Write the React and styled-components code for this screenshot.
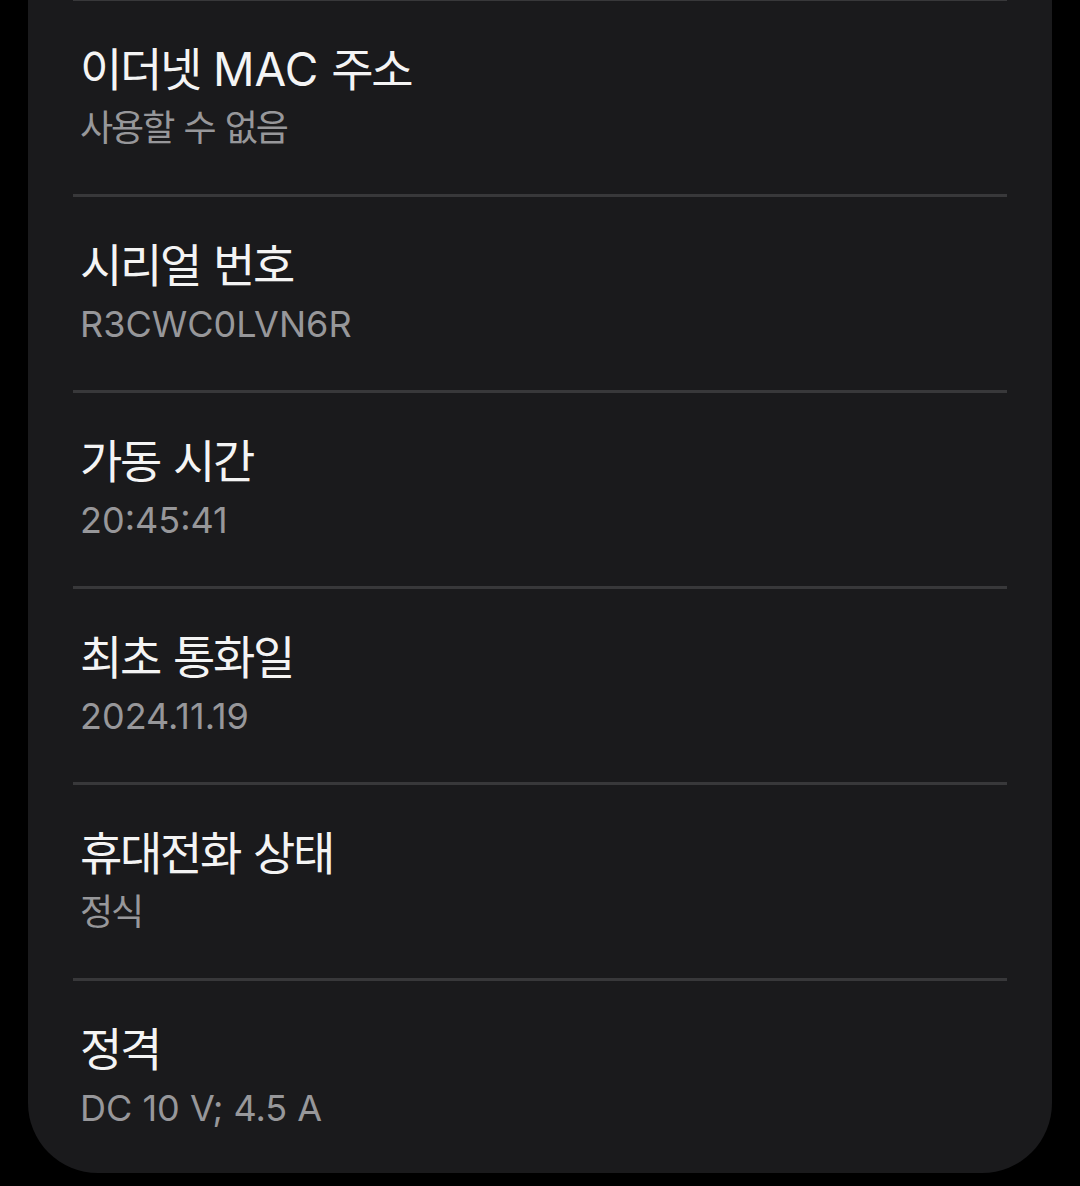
import React from 'react';
import styled, { createGlobalStyle } from 'styled-components';

const GlobalStyle = createGlobalStyle`
  html, body {
    margin: 0;
    padding: 0;
    background: #000;
  }
  body {
    font-family: Inter, "Noto Sans CJK KR", sans-serif;
    -webkit-font-smoothing: antialiased;
  }
`;

const Page = styled.div`
  width: 1080px;
  height: 1186px;
  background: #000;
  overflow: hidden;
`;

const Card = styled.div`
  margin: -2px 28px 0;
  padding: 0 45px;
  height: 1175px;
  background: #1a1a1c;
  border-radius: 0 0 70px 70px;
  box-sizing: border-box;
`;

const Row = styled.div`
  height: 196px;
  box-sizing: border-box;
  border-top: 3px solid #38383a;
  padding: 40px 7px 0;
  display: flex;
  flex-direction: column;
`;

const Title = styled.div`
  color: #f4f4f4;
  font-size: 46px;
  line-height: 56px;
  white-space: nowrap;
`;

const Value = styled.div`
  color: #97979a;
  font-size: 36px;
  line-height: 46px;
  margin-top: 8px;
  white-space: nowrap;
`;

// Samsung's Hangul is narrower than Noto's full-width glyphs
const Hangul = styled.span`
  letter-spacing: ${(p) => p.$tight};
`;

const splitHangul = (text, tight) =>
  text.split(/([\uac00-\ud7a3]+)/).map((part, i) =>
    /[\uac00-\ud7a3]/.test(part) ? (
      <Hangul key={i} $tight={tight}>{part}</Hangul>
    ) : (
      part
    )
  );

const items = [
  { title: '이더넷 MAC 주소', value: '사용할 수 없음' },
  { title: '시리얼 번호', value: 'R3CWC0LVN6R' },
  { title: '가동 시간', value: '20:45:41' },
  { title: '최초 통화일', value: '2024.11.19' },
  { title: '휴대전화 상태', value: '정식' },
  { title: '정격', value: 'DC 10 V; 4.5 A' },
];

export default function App() {
  return (
    <Page>
      <GlobalStyle />
      <Card>
        {items.map((item) => (
          <Row key={item.title}>
            <Title>{splitHangul(item.title, '-2.3px')}</Title>
            <Value>{splitHangul(item.value, '-2px')}</Value>
          </Row>
        ))}
      </Card>
    </Page>
  );
}
